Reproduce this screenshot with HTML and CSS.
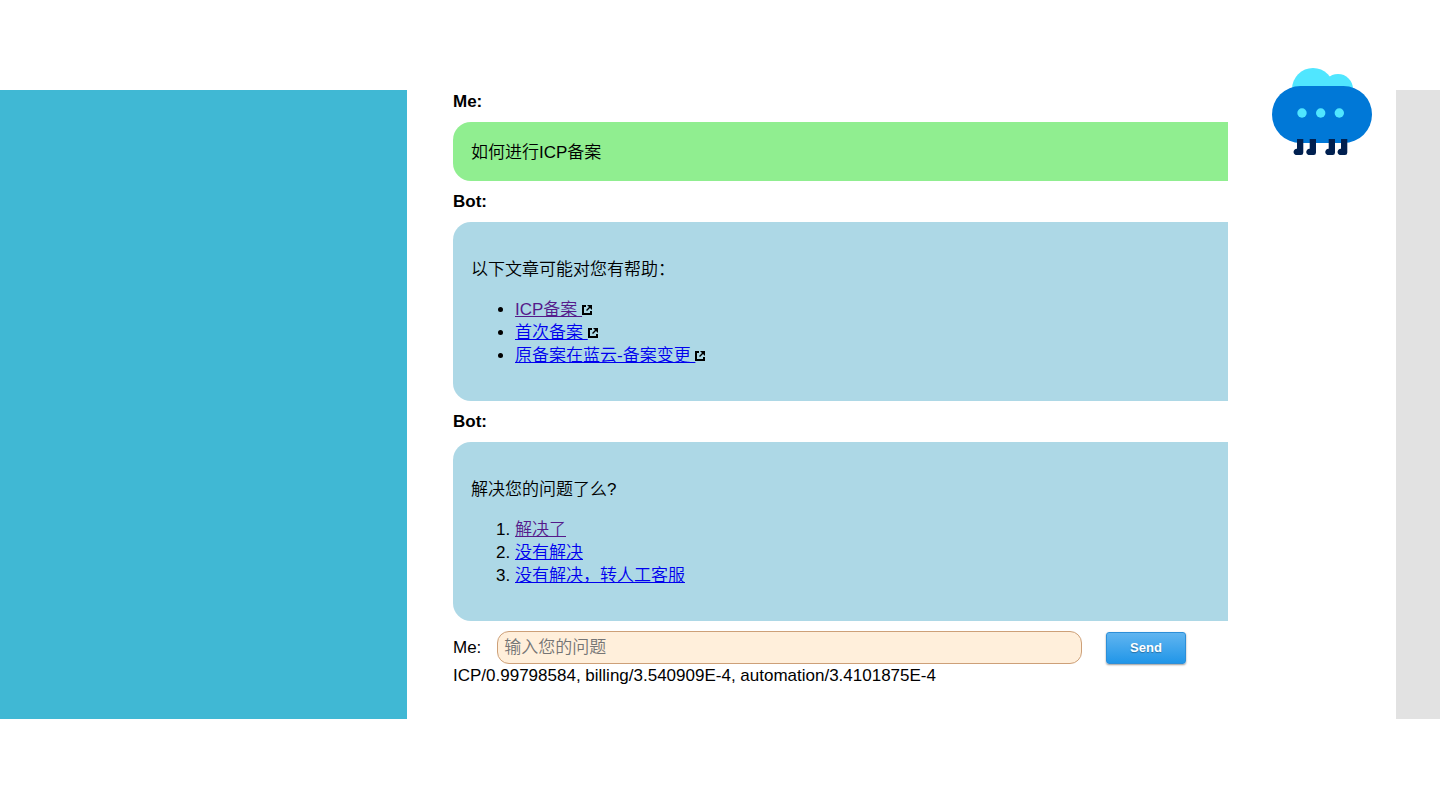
FILE: index.html
```html
<!DOCTYPE html>
<html lang="zh-CN">
<head>
    <meta charset="UTF-8">
    <meta name="viewport" content="width=device-width, initial-scale=1.0">
    <title>Bot</title>
    <link rel="stylesheet" href="styles.css">
</head>
<body>

    <div class="page">
        <aside class="left-side"></aside>

        <main class="main">
            <div class="chat">
                <h2 class="name">Me:</h2>
                <div class="message me">如何进行ICP备案</div>

                <h2 class="name">Bot:</h2>
                <div class="message bot">
                    <p>以下文章可能对您有帮助：</p>
                    <ul>
                        <li><a class="visited" href="#icp">ICP备案&nbsp;</a><svg class="external" viewBox="0 0 10 10"><path d="M4 1H1V9H9V6"/><path class="arrow" d="M5 0H10V5L8 3L5 6L4 5L7 2Z"/></svg></li>
                        <li><a href="#first">首次备案&nbsp;</a><svg class="external" viewBox="0 0 10 10"><path d="M4 1H1V9H9V6"/><path class="arrow" d="M5 0H10V5L8 3L5 6L4 5L7 2Z"/></svg></li>
                        <li><a href="#change">原备案在蓝云-备案变更&nbsp;</a><svg class="external" viewBox="0 0 10 10"><path d="M4 1H1V9H9V6"/><path class="arrow" d="M5 0H10V5L8 3L5 6L4 5L7 2Z"/></svg></li>
                    </ul>
                </div>

                <h2 class="name">Bot:</h2>
                <div class="message bot">
                    <p>解决您的问题了么?</p>
                    <ol>
                        <li><a class="visited" href="#yes">解决了</a></li>
                        <li><a href="#no">没有解决</a></li>
                        <li><a href="#service">没有解决，转人工客服</a></li>
                    </ol>
                </div>

                <form class="ask">
                    <label for="question">Me:</label>
                    <input type="text" id="question" placeholder="输入您的问题">
                    <button type="button">Send</button>
                </form>
                <div class="score">ICP/0.99798584, billing/3.540909E-4, automation/3.4101875E-4</div>
            </div>

            <!-- Bot logo -->
            <svg class="logo" viewBox="0 0 100 90">
                <g fill="#50e6ff">
                    <circle cx="41" cy="22" r="21"/>
                    <circle cx="66" cy="22" r="15"/>
                </g>
                <rect fill="#0078d7" x="0" y="19" width="100" height="57" rx="28.5"/>
                <g fill="#50e6ff">
                    <circle cx="30" cy="46" r="4.7"/>
                    <circle cx="48.7" cy="46" r="4.7"/>
                    <circle cx="67.3" cy="46" r="4.7"/>
                </g>
                <g fill="#002050">
                    <path id="leg" d="M25 72H31.3V85.5Q31.3 88 29 88H25.5A3.2 3.2 0 1 1 25 81.7Z"/>
                    <use href="#leg" x="12.7"/>
                    <use href="#leg" x="31.7"/>
                    <use href="#leg" x="44"/>
                </g>
            </svg>
        </main>

        <aside class="right-side"></aside>
    </div>

</body>
</html>
```
FILE: styles.css
```css
* {
    box-sizing: border-box;
}
body {
    margin: 0;
    background: #fff;
    color: #000;
    font-family: "Liberation Sans", "Noto Sans CJK SC", sans-serif;
    font-size: 17px;
    font-weight: 350;
    line-height: 23px;
}
.page {
    display: grid;
    grid-template-columns: 407px 1fr 44px;
    padding: 90px 0;
}
.left-side {
    background: #40b8d4;
}
.right-side {
    background: #e2e2e2;
}
.main {
    display: flex;
    align-items: flex-start;
    gap: 44px;
    padding: 0 24px 32px 46px;
}
.chat {
    flex: 1;
}

/* Messages */
.name {
    margin: 9px 0;
    font-size: 17px;
    font-weight: bold;
}
.name:first-child {
    margin-top: 0;
}
.message {
    padding: 19px 18px 17px;
    border-radius: 18px 0 0 18px;
}
.me {
    background: #90ee90;
}
.bot {
    background: #add8e6;
}
.message p, .message ul, .message ol {
    margin: 17px 0;
}
.message ul, .message ol {
    padding-left: 44px;
}
a {
    color: #0000ee;
}
a.visited {
    color: #551a8b;
}
.external {
    width: 10px;
    height: 10px;
    fill: none;
    stroke: #000;
    stroke-width: 2;
}
.external .arrow {
    fill: #000;
    stroke: none;
}

/* Question form */
.ask {
    display: flex;
    align-items: center;
    margin-top: 10px;
    padding-right: 42px;
}
.ask label {
    margin-right: 16px;
}
.ask input {
    flex: 1;
    min-width: 0;
    height: 33px;
    padding: 0 6px;
    border: 1px solid #cda078;
    border-radius: 12px;
    background: #ffefdb;
    font: inherit;
}
.ask input::placeholder {
    color: #757575;
}
.ask button {
    width: 80px;
    height: 32px;
    margin-left: 24px;
    border: 1px solid #2d8fd8;
    border-radius: 3px;
    background: linear-gradient(#61b5f0, #2196e8);
    box-shadow: 0 1px 2px rgba(0, 0, 0, 0.4);
    color: #fff;
    font-family: inherit;
    font-size: 13px;
    font-weight: bold;
    text-shadow: 0 1px 1px rgba(0, 0, 0, 0.3);
    cursor: pointer;
}

.logo {
    width: 100px;
    height: 90px;
    margin-top: -23px;
}
```
